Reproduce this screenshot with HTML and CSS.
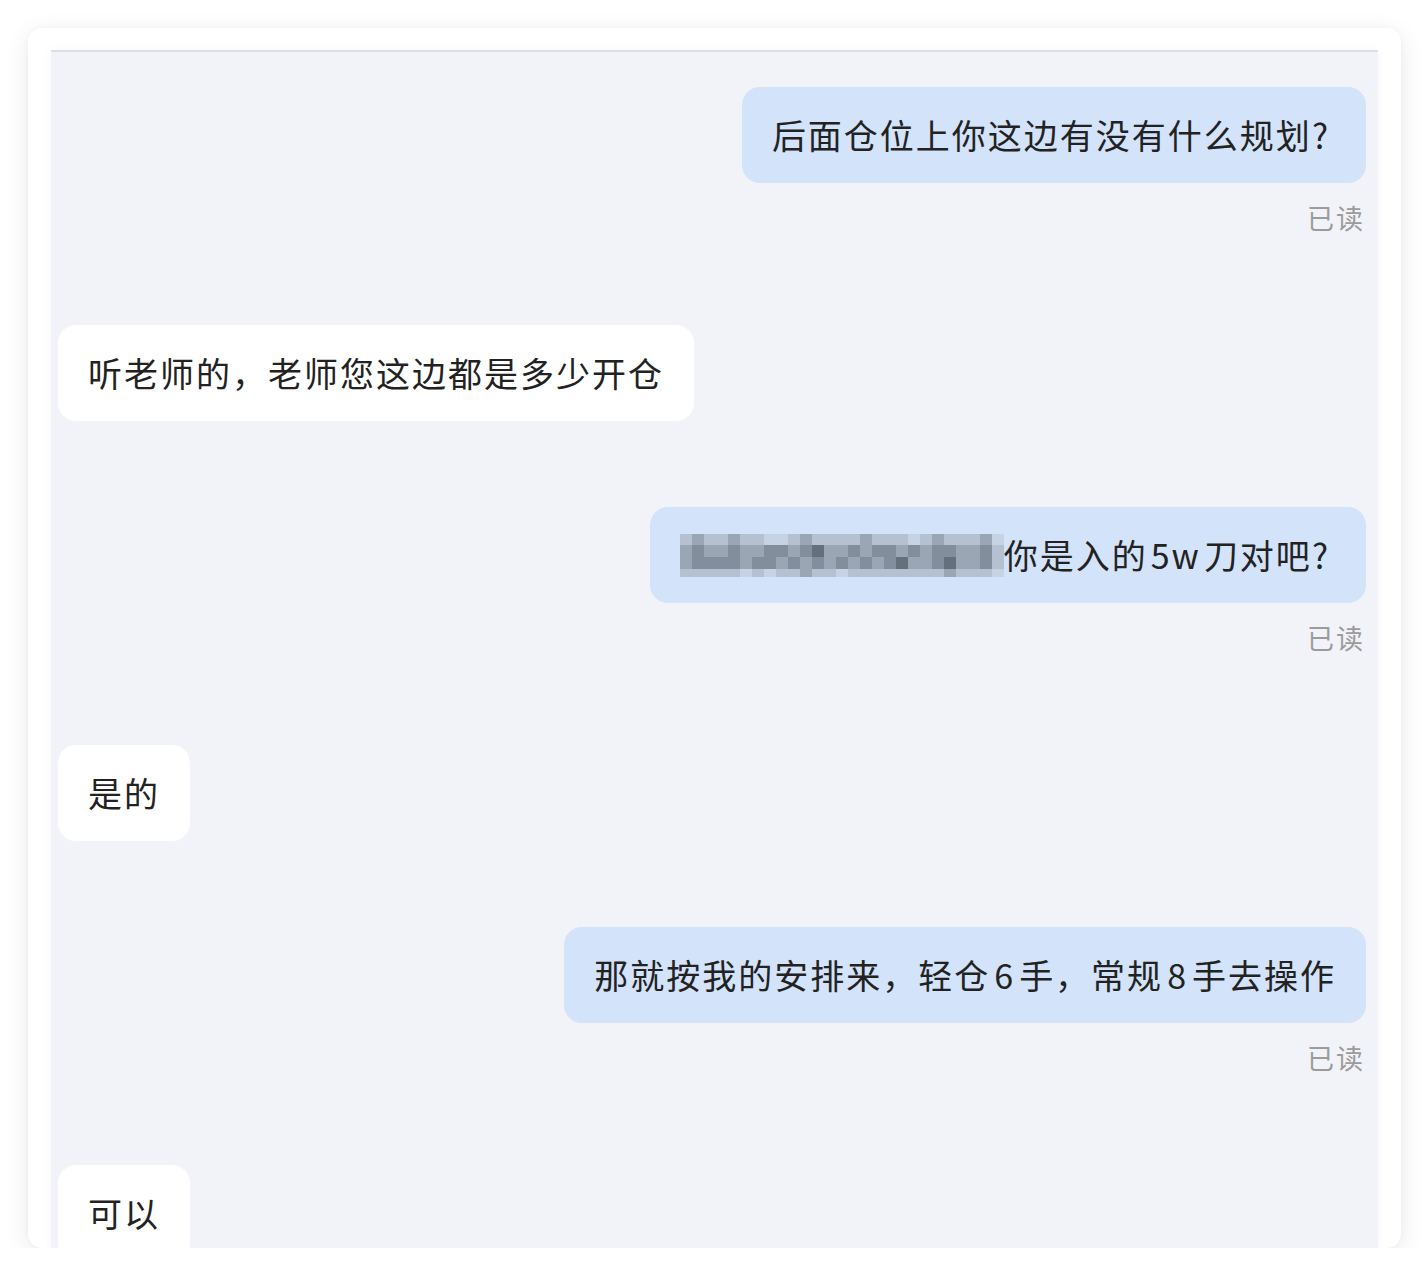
FILE: index.html
```html
<!DOCTYPE html>
<html lang="zh-CN">
<head>
<meta charset="utf-8">
<title>聊天记录</title>
<link rel="stylesheet" href="styles.css">
</head>
<body>
<div class="card">
  <div class="panel">
    <div class="msg out">
      <div class="bubble">后面仓位上你这边有没有什么规划<span class="q">?</span></div>
      <div class="read">已读</div>
    </div>
    <div class="msg in">
      <div class="bubble">听老师的，老师您这边都是多少开仓</div>
    </div>
    <div class="msg out">
      <div class="bubble row">
        <div class="mosaic">
          <i class="s1"></i><i class="s2"></i><i class="s1"></i><i class="s1"></i><i class="s2"></i><i class="s1"></i><i class="s1"></i><i class="s0"></i><i class="s0"></i><i class="s1"></i><i class="s2"></i><i class="s1"></i><i class="s1"></i><i class="s1"></i><i class="s1"></i><i class="s2"></i><i class="s1"></i><i class="s1"></i><i class="s1"></i><i class="s0"></i><i class="s1"></i><i class="s2"></i><i class="s1"></i><i class="s1"></i><i class="s1"></i><i class="s2"></i><i class="s0"></i>
          <i class="s2"></i><i class="s3"></i><i class="s2"></i><i class="s2"></i><i class="s3"></i><i class="s2"></i><i class="s2"></i><i class="s3"></i><i class="s3"></i><i class="s2"></i><i class="s3"></i><i class="s4"></i><i class="s2"></i><i class="s2"></i><i class="s3"></i><i class="s2"></i><i class="s3"></i><i class="s3"></i><i class="s2"></i><i class="s3"></i><i class="s2"></i><i class="s3"></i><i class="s3"></i><i class="s2"></i><i class="s2"></i><i class="s3"></i><i class="s1"></i>
          <i class="s2"></i><i class="s3"></i><i class="s3"></i><i class="s3"></i><i class="s3"></i><i class="s2"></i><i class="s3"></i><i class="s3"></i><i class="s2"></i><i class="s3"></i><i class="s2"></i><i class="s3"></i><i class="s2"></i><i class="s3"></i><i class="s2"></i><i class="s3"></i><i class="s2"></i><i class="s3"></i><i class="s4"></i><i class="s2"></i><i class="s2"></i><i class="s3"></i><i class="s4"></i><i class="s2"></i><i class="s2"></i><i class="s3"></i><i class="s1"></i>
          <i class="s1"></i><i class="s1"></i><i class="s1"></i><i class="s1"></i><i class="s1"></i><i class="s0"></i><i class="s1"></i><i class="s0"></i><i class="s1"></i><i class="s1"></i><i class="s2"></i><i class="s1"></i><i class="s1"></i><i class="s0"></i><i class="s1"></i><i class="s1"></i><i class="s1"></i><i class="s1"></i><i class="s1"></i><i class="s1"></i><i class="s1"></i><i class="s1"></i><i class="s2"></i><i class="s1"></i><i class="s1"></i><i class="s1"></i><i class="s0"></i>
        </div>
        <span>你是入的<span class="latin">5w</span>刀对吧<span class="q">?</span></span>
      </div>
      <div class="read">已读</div>
    </div>
    <div class="msg in">
      <div class="bubble">是的</div>
    </div>
    <div class="msg out">
      <div class="bubble">那就按我的安排来，轻仓<span class="num">6</span>手，常规<span class="num">8</span>手去操作</div>
      <div class="read">已读</div>
    </div>
    <div class="msg in">
      <div class="bubble">可以</div>
    </div>
  </div>
</div>
</body>
</html>
```

FILE: styles.css
```css
html, body {
  margin: 0;
  padding: 0;
  background: #ffffff;
}

body {
  font-family: "Noto Sans CJK SC", "Noto Sans", sans-serif;
}

.card {
  margin: 28px 0 0 28px;
  width: 1373px;
  height: 1220px;
  box-sizing: border-box;
  padding: 22px 23px 0 23px;
  background: #ffffff;
  border-radius: 14px;
  overflow: hidden;
  box-shadow: 0 6px 26px rgba(0, 0, 0, 0.09), 0 0 6px rgba(0, 0, 0, 0.03);
  display: flex;
  flex-direction: column;
}

.panel {
  flex: 1;
  background: #f2f3f8;
  border-top: 2px solid #dcdee7;
  padding: 35px 12px 0 7px;
  display: flex;
  flex-direction: column;
  gap: 86px;
  overflow: hidden;
  box-shadow: 0 0 10px rgba(0, 0, 0, 0.04);
}

.msg {
  display: flex;
  flex-direction: column;
}

.msg.out {
  align-items: flex-end;
}

.msg.in {
  align-items: flex-start;
}

.bubble {
  padding: 24px 30px;
  font-size: 34px;
  line-height: 48px;
  letter-spacing: 2px;
  color: #222222;
  border-radius: 18px;
  white-space: nowrap;
  flex-shrink: 0;
}

.out .bubble {
  background: #d3e3fa;
}

.in .bubble {
  background: #ffffff;
}

.bubble.row {
  display: flex;
  align-items: center;
  height: 48px;
}

.num {
  margin: 0 4px;
}

.latin {
  margin: 0 3px;
}

.q {
  margin-right: 6px;
}

.read {
  padding-top: 14px;
  line-height: 42px;
  font-size: 27px;
  letter-spacing: 2px;
  color: #9b9b9b;
  margin-right: 1px;
}

.mosaic {
  display: grid;
  grid-template-columns: repeat(27, 12px);
  grid-template-rows: 11px 12px 12px 8px;
}

.mosaic i {
  display: block;
}

.s0 { background: #c6d3e5; }
.s1 { background: #b5c1d1; }
.s2 { background: #9ba6b5; }
.s3 { background: #838e9c; }
.s4 { background: #66707c; }
```
